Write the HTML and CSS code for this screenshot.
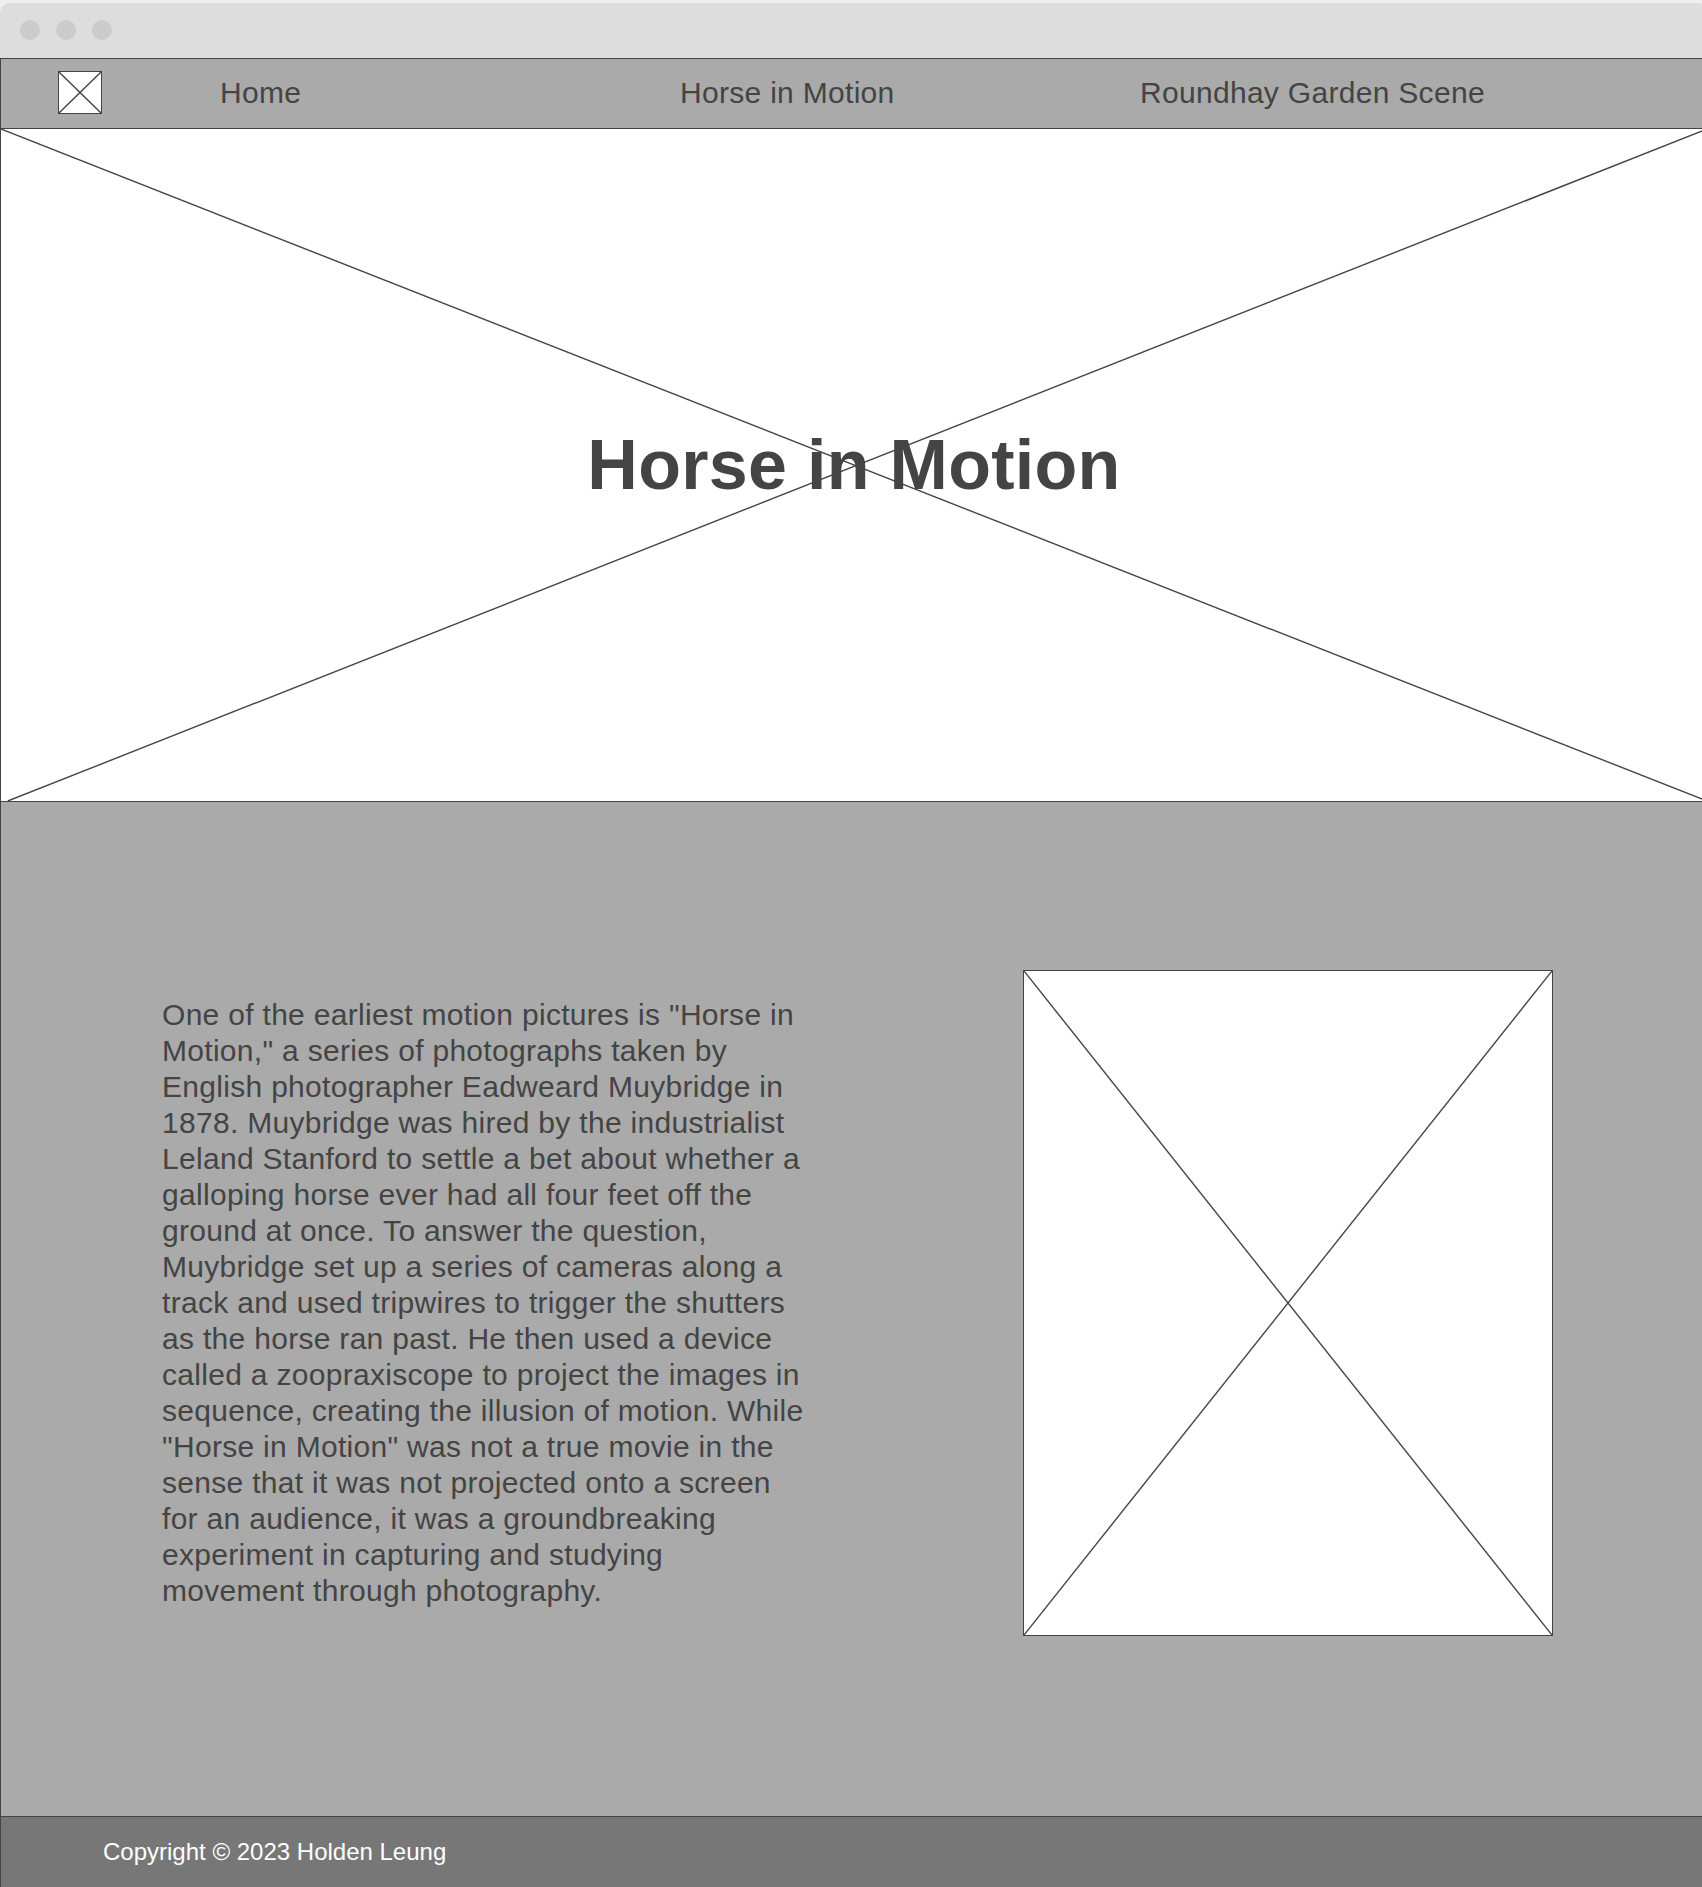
FILE: index.html
```html
<!DOCTYPE html>
<html lang="en">
<head>
<meta charset="utf-8">
<title>Horse in Motion</title>
<link rel="stylesheet" href="styles.css">
</head>
<body>
<div class="window">
  <div class="chrome">
    <span class="dot"></span><span class="dot"></span><span class="dot"></span>
  </div>
  <div class="frame">
    <nav class="nav">
      <div class="logo">
        <svg class="xsvg" viewBox="0 0 100 100" preserveAspectRatio="none"><line x1="0" y1="0" x2="100" y2="100"/><line x1="100" y1="0" x2="0" y2="100"/></svg>
      </div>
      <ul class="menu">
        <li>Home</li>
        <li>Horse in Motion</li>
        <li>Roundhay Garden Scene</li>
      </ul>
    </nav>
    <header class="hero">
      <svg class="xsvg hero-x" viewBox="0 0 100 100" preserveAspectRatio="none"><line x1="0" y1="0" x2="100" y2="100"/><line x1="100" y1="0" x2="0.4" y2="100"/></svg>
      <h1 class="hero-title">Horse in Motion</h1>
    </header>
    <main class="content">
      <p class="text">One of the earliest motion pictures is "Horse in Motion," a series of photographs taken by English photographer Eadweard Muybridge in 1878. Muybridge was hired by the industrialist Leland Stanford to settle a bet about whether a galloping horse ever had all four feet off the ground at once. To answer the question, Muybridge set up a series of cameras along a track and used tripwires to trigger the shutters as the horse ran past. He then used a device called a zoopraxiscope to project the images in sequence, creating the illusion of motion. While "Horse in Motion" was not a true movie in the sense that it was not projected onto a screen for an audience, it was a groundbreaking experiment in capturing and studying movement through photography.</p>
      <div class="picture">
        <svg class="xsvg" viewBox="0 0 100 100" preserveAspectRatio="none"><line x1="0" y1="0" x2="100" y2="100"/><line x1="100" y1="0" x2="0" y2="100"/></svg>
      </div>
    </main>
    <footer class="footer">Copyright © 2023 Holden Leung</footer>
  </div>
</div>
</body>
</html>
```

FILE: styles.css
```css
html, body {
  margin: 0;
  padding: 0;
  overflow: hidden;
}

body {
  background: #efefef;
  font-family: "Liberation Sans", Arial, sans-serif;
  color: #444;
}

.window {
  width: 1708px;
  padding-top: 3px;
}

.chrome {
  height: 55px;
  background: #dddddd;
  border-radius: 10px 10px 0 0;
  display: flex;
  align-items: flex-start;
  gap: 16px;
  padding: 17px 0 0 20px;
  box-sizing: border-box;
}

.dot {
  width: 20px;
  height: 20px;
  border-radius: 50%;
  background: #cbcbcb;
}

.frame {
  border-left: 1px solid #444;
  border-right: 1px solid #444;
}

.nav {
  height: 69px;
  background: #aaaaaa;
  border-top: 1px solid #444;
  border-bottom: 1px solid #444;
  display: flex;
  align-items: center;
  padding-left: 57px;
}

.logo {
  width: 42px;
  height: 41px;
  border: 1px solid #444;
  background: #fff;
  display: flex;
  margin-top: -3px;
}

.xsvg {
  width: 100%;
  height: 100%;
  display: block;
}

.xsvg line {
  stroke: #444;
  stroke-width: 1.4;
  vector-effect: non-scaling-stroke;
}

.menu {
  list-style: none;
  margin: -2px 0 0 118px;
  padding: 0;
  display: flex;
}

.menu li {
  width: 460px;
  font-size: 30px;
  letter-spacing: 0.3px;
  color: #444;
  white-space: nowrap;
}

.hero {
  position: relative;
  height: 672px;
  background: #fff;
  border-bottom: 1px solid #444;
  display: flex;
  align-items: center;
  justify-content: center;
}

.hero-x {
  position: absolute;
  left: 0;
  top: 0;
}

.hero-title {
  position: relative;
  margin: 0;
  font-size: 70px;
  font-weight: bold;
  letter-spacing: 0.3px;
  color: #444;
  line-height: normal;
}

.content {
  background: #aaaaaa;
  display: flex;
  align-items: center;
  padding: 168px 0 180px 161px;
}

.text {
  width: 645px;
  margin: 0;
  font-size: 30px;
  letter-spacing: 0.3px;
  line-height: 36px;
  color: #444;
}

.picture {
  width: 528px;
  height: 664px;
  margin-left: 216px;
  border: 1px solid #444;
  background: #fff;
  display: flex;
}

.footer {
  height: 70px;
  background: #777777;
  border-top: 1px solid #444;
  color: #fff;
  font-size: 24px;
  line-height: 70px;
  padding-left: 102px;
}
```
